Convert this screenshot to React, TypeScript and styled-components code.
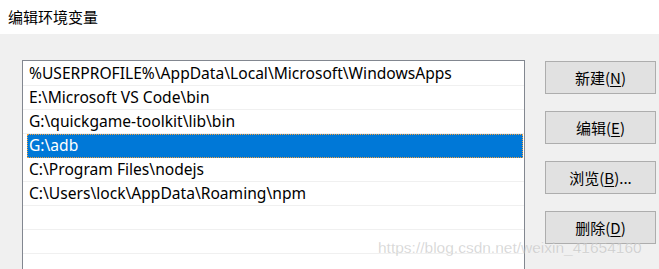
import React from 'react';
import styled, { createGlobalStyle } from 'styled-components';

const paths = [
  '%USERPROFILE%\\AppData\\Local\\Microsoft\\WindowsApps',
  'E:\\Microsoft VS Code\\bin',
  'G:\\quickgame-toolkit\\lib\\bin',
  'G:\\adb',
  'C:\\Program Files\\nodejs',
  'C:\\Users\\lock\\AppData\\Roaming\\npm',
  '',
  '',
  '',
];

const buttons = [
  { label: '新建(', key: 'N', tail: ')' },
  { label: '编辑(', key: 'E', tail: ')' },
  { label: '浏览(', key: 'B', tail: ')...' },
  { label: '删除(', key: 'D', tail: ')' },
];

const App = () => {
  return (
    <>
      <GlobalStyle />
      <StyledWindow>
        <StyledTitleBar>编辑环境变量</StyledTitleBar>
        <StyledBody>
          <StyledList>
            {paths.map((p, i) => (
              <StyledRow key={i} $selected={i === 3}>
                {p}
              </StyledRow>
            ))}
          </StyledList>
          <StyledButtons>
            {buttons.map((b) => (
              <StyledButton key={b.key}>
                {b.label}
                <u>{b.key}</u>
                {b.tail}
              </StyledButton>
            ))}
          </StyledButtons>
        </StyledBody>
        <StyledWatermark>https://blog.csdn.net/weixin_41654160</StyledWatermark>
      </StyledWindow>
    </>
  );
};

export default App;

const GlobalStyle = createGlobalStyle`
  html, body {
    margin: 0;
    padding: 0;
    overflow: hidden;
  }
  body {
    font-family: 'Noto Sans', 'Noto Sans CJK SC', sans-serif;
    color: #000;
  }
`;

const StyledWindow = styled.div`
  position: relative;
  width: 659px;
  height: 269px;
  background-color: #f0f0f0;
  overflow: hidden;
`;

const StyledTitleBar = styled.div`
  height: 34px;
  box-sizing: border-box;
  padding: 6px 0 0 8px;
  background-color: #fff;
  font-family: 'Noto Sans CJK SC', sans-serif;
  font-size: 15px;
  line-height: 22px;
`;

const StyledBody = styled.div`
  display: flex;
  align-items: flex-start;
  gap: 20px;
  padding: 26px 0 0 22px;
`;

const StyledList = styled.div`
  width: 503px;
  height: 240px;
  box-sizing: border-box;
  border: 1px solid #828790;
  background-color: #fff;
  padding-top: 1px;
  display: flex;
  flex-direction: column;
`;

const StyledRow = styled.div<{ $selected?: boolean }>`
  height: 24px;
  flex-shrink: 0;
  box-sizing: border-box;
  padding-left: ${(p) => (p.$selected ? '2px' : '6px')};
  margin-left: ${(p) => (p.$selected ? '4px' : '0')};
  margin-right: ${(p) => (p.$selected ? '1px' : '0')};
  border-bottom: 1px solid ${(p) => (p.$selected ? '#0078d7' : '#f0f0f0')};
  background-color: ${(p) => (p.$selected ? '#0078d7' : 'transparent')};
  color: ${(p) => (p.$selected ? '#fff' : '#000')};
  outline: ${(p) => (p.$selected ? '1px dotted #f0a040' : 'none')};
  outline-offset: -1px;
  font-size: 15.6px;
  line-height: 23px;
  white-space: nowrap;
`;

const StyledButtons = styled.div`
  display: flex;
  flex-direction: column;
  gap: 17px;
  padding-top: 1px;
`;

const StyledButton = styled.div`
  width: 111px;
  height: 33px;
  box-sizing: border-box;
  border: 1px solid #adadad;
  background-color: #e1e1e1;
  display: flex;
  align-items: center;
  justify-content: center;
  font-family: 'Noto Sans CJK SC', sans-serif;
  font-size: 15px;
  u {
    text-underline-offset: 2px;
  }
`;

const StyledWatermark = styled.div`
  position: absolute;
  left: 378px;
  top: 239px;
  font-family: 'Liberation Sans', Arial, sans-serif;
  font-size: 15.5px;
  color: rgba(160, 160, 160, 0.45);
  -webkit-text-stroke: 0.3px rgba(255, 255, 255, 0.5);
  pointer-events: none;
`;
